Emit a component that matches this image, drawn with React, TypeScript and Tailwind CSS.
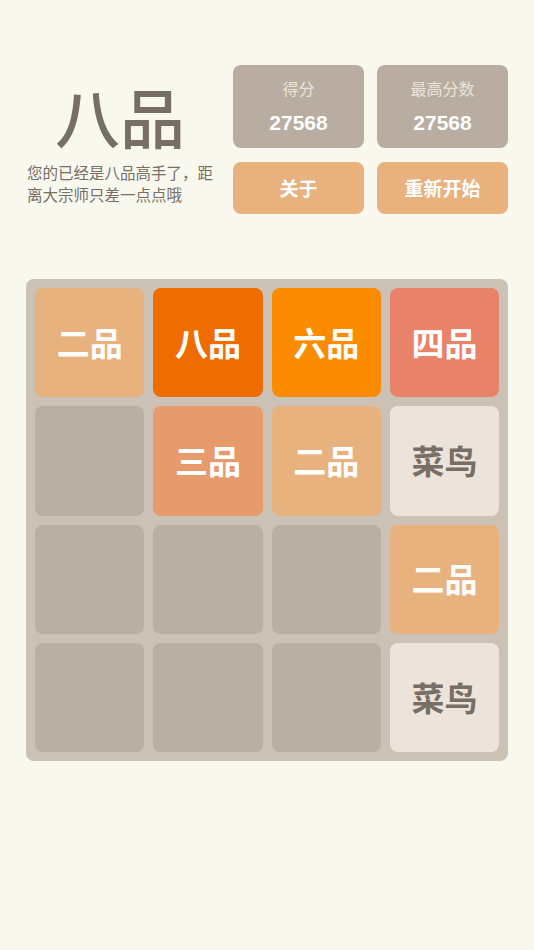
import React from 'react'

type Tile = { label: string; bg: string; text: string } | null

const T = {
  two: { label: '二品', bg: 'bg-[#e8b27f]', text: 'text-white' },
  three: { label: '三品', bg: 'bg-[#e79a6c]', text: 'text-white' },
  four: { label: '四品', bg: 'bg-[#e8836a]', text: 'text-white' },
  six: { label: '六品', bg: 'bg-[#fb8c00]', text: 'text-white' },
  eight: { label: '八品', bg: 'bg-[#ef6c00]', text: 'text-white' },
  rookie: { label: '菜鸟', bg: 'bg-[#ece4da]', text: 'text-[#776e65]' },
}

const board: Tile[] = [
  T.two, T.eight, T.six, T.four,
  null, T.three, T.two, T.rookie,
  null, null, null, T.two,
  null, null, null, T.rookie,
]

function ScoreBox({ label, value }: { label: string; value: string }) {
  return (
    <div className="w-[131px] h-[83px] rounded-[8px] bg-[#b8ada0] flex flex-col items-center pt-[12px]">
      <span className="text-[16px] leading-[22px] text-[#ece4da]">{label}</span>
      <span className="text-[21px] leading-[26px] font-bold text-white mt-[11px] font-['Liberation_Sans','Open_Sans',sans-serif]">
        {value}
      </span>
    </div>
  )
}

function ActionButton({ children }: { children: React.ReactNode }) {
  return (
    <button className="w-[131px] h-[52px] rounded-[8px] bg-[#e8b17e] text-white text-[19px] font-bold flex items-center justify-center">
      {children}
    </button>
  )
}

export default function App() {
  return (
    <div className="min-h-[950px] bg-[#f9f8ef] font-['Noto_Sans_CJK_SC','Noto_Sans',sans-serif] px-[26px] pt-[65px]">
      <div className="flex">
        <div className="w-[187px] flex flex-col pl-[1px]">
          <h1 className="text-center text-[65px] leading-[80px] mt-[10px] font-medium text-[#776e65]">八品</h1>
          <p className="text-[15.5px] leading-[22px] text-[#776e65] mt-[6px]">
            您的已经是八品高手了，距离大宗师只差一点点哦
          </p>
        </div>
        <div className="ml-auto flex flex-col gap-[14px]">
          <div className="flex gap-[13px]">
            <ScoreBox label="得分" value="27568" />
            <ScoreBox label="最高分数" value="27568" />
          </div>
          <div className="flex gap-[13px]">
            <ActionButton>关于</ActionButton>
            <ActionButton>重新开始</ActionButton>
          </div>
        </div>
      </div>

      <div className="mt-[65px] w-[482px] h-[482px] rounded-[8px] bg-[#cbc1b5] p-[9px] grid grid-cols-4 grid-rows-4 gap-[9px]">
        {board.map((tile, i) =>
          tile ? (
            <div
              key={i}
              className={`rounded-[8px] flex items-center justify-center text-[33px] font-semibold ${tile.bg} ${tile.text}`}
            >
              {tile.label}
            </div>
          ) : (
            <div key={i} className="rounded-[8px] bg-[#b9afa2]" />
          ),
        )}
      </div>
    </div>
  )
}
